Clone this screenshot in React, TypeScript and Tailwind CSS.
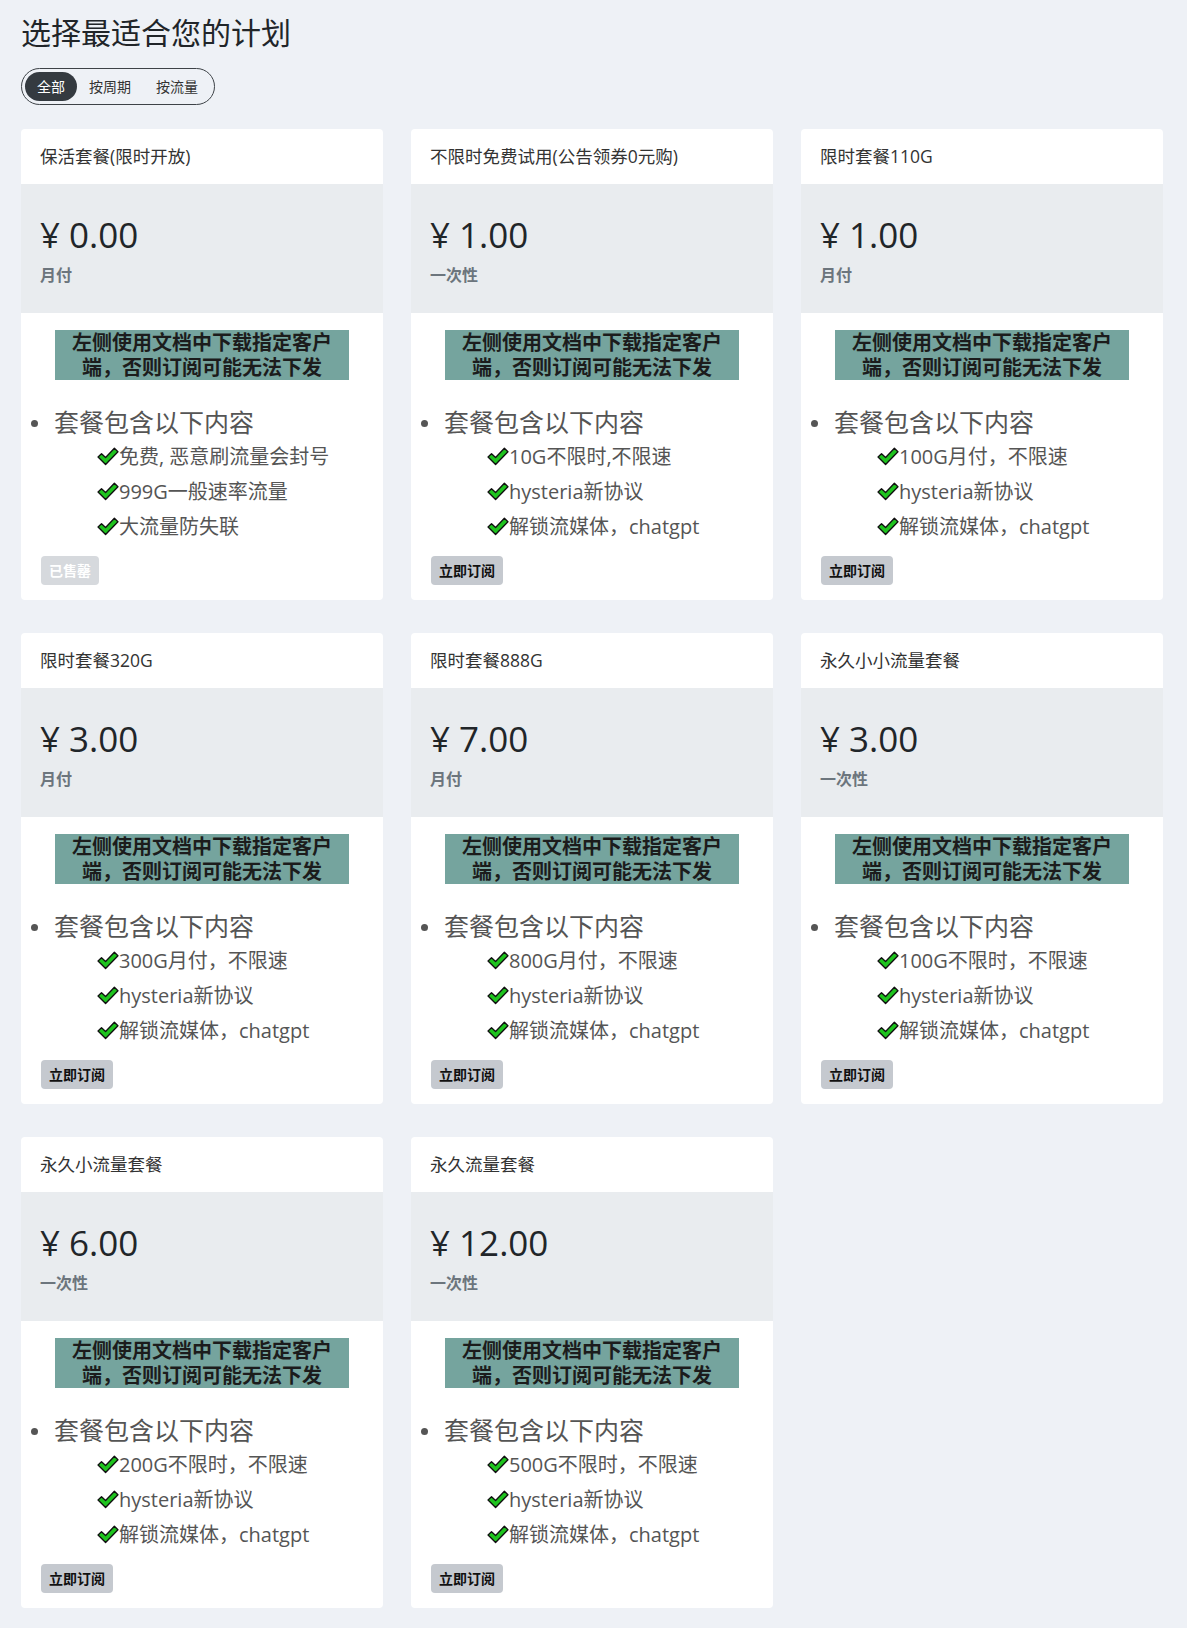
import React from 'react';

type Plan = {
  name: string;
  price: string;
  period: string;
  features: string[];
  soldOut?: boolean;
};

const plans: Plan[] = [
  {
    name: '保活套餐(限时开放)',
    price: '0.00',
    period: '月付',
    features: ['免费, 恶意刷流量会封号', '999G一般速率流量', '大流量防失联'],
    soldOut: true
  },
  {
    name: '不限时免费试用(公告领券0元购)',
    price: '1.00',
    period: '一次性',
    features: ['10G不限时,不限速', 'hysteria新协议', '解锁流媒体，chatgpt']
  },
  {
    name: '限时套餐110G',
    price: '1.00',
    period: '月付',
    features: ['100G月付，不限速', 'hysteria新协议', '解锁流媒体，chatgpt']
  },
  {
    name: '限时套餐320G',
    price: '3.00',
    period: '月付',
    features: ['300G月付，不限速', 'hysteria新协议', '解锁流媒体，chatgpt']
  },
  {
    name: '限时套餐888G',
    price: '7.00',
    period: '月付',
    features: ['800G月付，不限速', 'hysteria新协议', '解锁流媒体，chatgpt']
  },
  {
    name: '永久小小流量套餐',
    price: '3.00',
    period: '一次性',
    features: ['100G不限时，不限速', 'hysteria新协议', '解锁流媒体，chatgpt']
  },
  {
    name: '永久小流量套餐',
    price: '6.00',
    period: '一次性',
    features: ['200G不限时，不限速', 'hysteria新协议', '解锁流媒体，chatgpt']
  },
  {
    name: '永久流量套餐',
    price: '12.00',
    period: '一次性',
    features: ['500G不限时，不限速', 'hysteria新协议', '解锁流媒体，chatgpt']
  }
];

const font = { fontFamily: '"Open Sans", "Noto Sans CJK SC", sans-serif' };

function Check() {
  return (
    <svg width="22" height="19" viewBox="0 0 21 18" className="shrink-0">
      <path
        d="M1 9.4 L4.3 6.3 L8.2 10 L16.6 1.2 L20 4.4 L8.2 16.6 Z"
        fill="#1ec31e"
        stroke="#111"
        strokeWidth="1.3"
        strokeLinejoin="round"
      />
    </svg>
  );
}

function PlanCard({ plan }: { plan: Plan }) {
  return (
    <div className="bg-white rounded-[4px] overflow-hidden flex flex-col">
      <div className="h-[55px] px-[19px] flex items-center text-[17.5px] text-[#333]">
        {plan.name}
      </div>

      <div className="h-[129px] bg-[#e9ecef] px-[19px] pt-[30px]">
        <div className="text-[35px] leading-[42px] text-[#212529]">¥ {plan.price}</div>
        <div className="mt-[7px] text-[16px] leading-6 font-semibold text-[#6c757d]">
          {plan.period}
        </div>
      </div>

      <div className="pt-[17px] pb-[15px]">
        <div className="mx-auto w-[294px] h-[50px] bg-[#75a49e] text-center text-[20px] leading-[25px] font-bold text-[#1c1c1c]">
          左侧使用文档中下载指定客户端，否则订阅可能无法下发
        </div>

        <div className="mt-[28px] pl-[10px] flex items-center h-[30px]">
          <span className="w-[7px] h-[7px] rounded-full bg-[#555]" />
          <span className="ml-[16px] text-[25px] text-[#555]">套餐包含以下内容</span>
        </div>

        <ul className="pl-[76px] mt-[1px]">
          {plan.features.map(f => (
            <li key={f} className="h-[35px] flex items-center text-[20px] text-[#555]">
              <Check />
              <span>{f}</span>
            </li>
          ))}
        </ul>

        <div className="mt-[12px] px-[20px]">
          {plan.soldOut ? (
            <button className="h-[29px] px-[8px] rounded-[4px] bg-[#d6d9dd] text-white text-[14px] font-bold">
              已售罄
            </button>
          ) : (
            <button className="h-[29px] px-[8px] rounded-[4px] bg-[#c5c9cf] text-[#111] text-[14px] font-bold">
              立即订阅
            </button>
          )}
        </div>
      </div>
    </div>
  );
}

export default function App() {
  return (
    <div className="min-h-[1628px] bg-[#eef1f6] pl-[21px] pt-[13px] pb-[20px]" style={font}>
      <h1 className="text-[30px] leading-[40px] text-[#212529]">选择最适合您的计划</h1>

      <div className="mt-[15px] inline-flex items-center h-[37px] p-[3px] rounded-full border border-[#3d4247]">
        <span className="h-[29px] px-[12px] flex items-center rounded-full bg-[#343a40] text-white text-[14px]">
          全部
        </span>
        <span className="h-[29px] px-[12px] flex items-center text-[14px] text-[#333]">按周期</span>
        <span className="h-[29px] px-[13px] flex items-center text-[14px] text-[#333]">按流量</span>
      </div>

      <div className="mt-[24px] grid grid-cols-[362px_362px_362px] gap-x-[28px] gap-y-[33px]">
        {plans.map((p, i) => (
          <PlanCard key={i} plan={p} />
        ))}
      </div>
    </div>
  );
}
